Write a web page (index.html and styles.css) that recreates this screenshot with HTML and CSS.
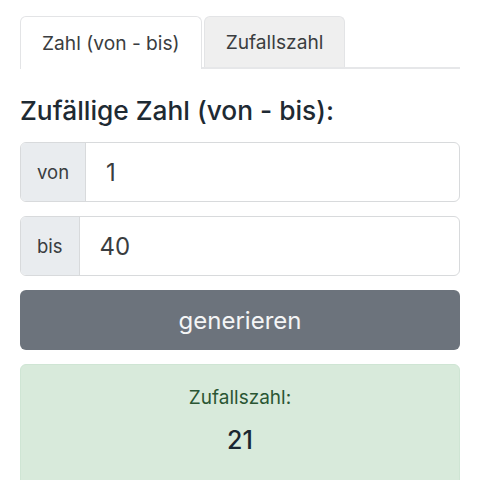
FILE: index.html
```html
<!DOCTYPE html>
<html lang="de">
<head>
<meta charset="utf-8">
<link rel="stylesheet" href="styles.css">
</head>
<body>
<div class="page">
  <div class="tabs">
    <div class="tab active">Zahl (von - bis)</div>
    <div class="tab">Zufallszahl</div>
  </div>
  <h2 class="title">Zufällige Zahl (von - bis):</h2>
  <div class="group">
    <span class="addon">von</span>
    <span class="field">1</span>
  </div>
  <div class="group">
    <span class="addon">bis</span>
    <span class="field">40</span>
  </div>
  <div class="btn">generieren</div>
  <div class="alert">
    <div class="alert-label">Zufallszahl:</div>
    <div class="alert-value">21</div>
  </div>
</div>
</body>
</html>
```
FILE: styles.css
```css
html, body {
  margin: 0;
  padding: 0;
  background: #fff;
  font-family: Inter, "Noto Sans", sans-serif;
  color: #212529;
}
.page {
  padding: 16px 20px 0 20px;
  height: 480px;
  box-sizing: border-box;
  overflow: hidden;
}
.tabs {
  display: flex;
  border-bottom: 2px solid #e6e7e9;
  gap: 2px;
}
.tab {
  height: 51px;
  box-sizing: border-box;
  padding: 0 21px;
  display: flex;
  align-items: center;
  font-size: 19.2px;
  color: #3a3d40;
  border: 1px solid #e3e4e6;
  border-bottom: none;
  border-radius: 6px 6px 0 0;
  background: #efefef;
  margin-bottom: -2px;
}
.tab.active {
  background: #fff;
  height: 53px;
}
.title {
  margin: 26px 0 15px 0;
  font-size: 26.3px;
  font-weight: 500;
  line-height: 32px;
  color: #1e2a33;
}
.group {
  display: flex;
  height: 60px;
  box-sizing: border-box;
  border: 1px solid #d8dadc;
  border-radius: 6px;
  overflow: hidden;
  margin-bottom: 14px;
}
.addon {
  background: #e9ecef;
  border-right: 1px solid #d8dadc;
  display: flex;
  align-items: center;
  padding: 0 16px;
  font-size: 18.5px;
  color: #3a3d40;
}
.field {
  display: flex;
  align-items: center;
  padding: 0 20px;
  font-size: 24px;
  color: #3a3d40;
  flex: 1;
}
.btn {
  height: 60px;
  background: #6c737c;
  border-radius: 6px;
  color: #f4f5f6;
  font-size: 24px;
  display: flex;
  align-items: center;
  justify-content: center;
  margin-bottom: 14px;
}
.alert {
  background: #d8eadb;
  border: 1px solid #cfe5d4;
  border-radius: 6px;
  height: 140px;
  box-sizing: border-box;
  padding-top: 19px;
  text-align: center;
}
.alert-label {
  font-size: 19px;
  color: #2a5634;
  line-height: 28px;
}
.alert-value {
  font-size: 25px;
  font-weight: 500;
  color: #1a2630;
  margin-top: 12px;
  line-height: 32px;
}
```
